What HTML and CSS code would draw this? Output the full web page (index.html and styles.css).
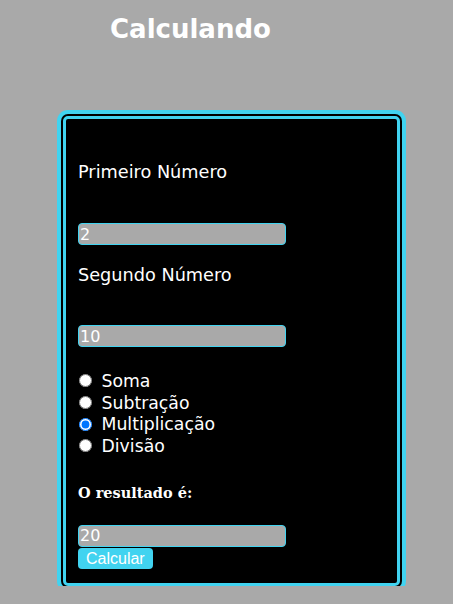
FILE: index.html
```html
<!DOCTYPE html>
<html lang="pt-BR">
<head>
<meta charset="utf-8">
<title>Calculando</title>
<link rel="stylesheet" href="styles.css">
</head>
<body>
<h1 class="title">Calculando</h1>
<div class="card">
  <label class="field-label" for="n1">Primeiro Número</label>
  <input class="num first-input" id="n1" type="text" value="2">
  <label class="field-label second-label" for="n2">Segundo Número</label>
  <input class="num first-input" id="n2" type="text" value="10">
  <div class="ops">
    <label class="op"><input type="radio" name="op"> Soma</label>
    <label class="op"><input type="radio" name="op"> Subtração</label>
    <label class="op"><input type="radio" name="op" checked> Multiplicação</label>
    <label class="op"><input type="radio" name="op"> Divisão</label>
  </div>
  <p class="result-label">O resultado é:</p>
  <input class="num result-input" type="text" value="20">
  <button class="calc" type="button">Calcular</button>
</div>
</body>
</html>
```
FILE: styles.css
```css
html, body {
  margin: 0;
  padding: 0;
  background: #a9a9a9;
}

.title {
  margin: 14px 0 0 0;
  padding-left: 110px;
  font-family: "DejaVu Sans", Verdana, sans-serif;
  font-weight: bold;
  font-size: 26px;
  line-height: 30px;
  color: #ffffff;
}

.card {
  margin: 72px 0 0 63px;
  width: 319px;
  padding: 43px 0 14px 12px;
  background: #000000;
  border: 3px solid #41d3f0;
  border-radius: 5px;
  box-shadow: 0 0 0 2px #000000, 0 0 0 6px #41d3f0;
  display: flex;
  flex-direction: column;
  align-items: flex-start;
}

.field-label {
  display: block;
  font-family: "DejaVu Sans", Verdana, sans-serif;
  font-size: 17.7px;
  line-height: 20px;
  color: #ffffff;
}

.second-label {
  margin-top: 20px;
}

.num {
  box-sizing: border-box;
  display: block;
  width: 208px;
  height: 22px;
  margin: 0;
  padding: 0 0 0 1px;
  background: #a9a9a9;
  border: 1px solid #41d3f0;
  border-radius: 4px;
  color: #ffffff;
  font-family: "DejaVu Sans", Verdana, sans-serif;
  font-size: 16px;
  outline: none;
}

.first-input {
  margin-top: 41px;
}

#n2 {
  margin-top: 40px;
}

.ops {
  margin-top: 23px;
  display: flex;
  flex-direction: column;
}

.op {
  display: flex;
  align-items: center;
  height: 21.7px;
  font-family: "DejaVu Sans", Verdana, sans-serif;
  font-size: 17.3px;
  color: #ffffff;
  white-space: pre;
}

.op input {
  margin: 0 4px 0 1px;
  width: 13px;
  height: 13px;
}

.result-label {
  margin: 28px 0 0 0;
  font-family: "DejaVu Serif", Georgia, serif;
  font-weight: bold;
  font-size: 14.5px;
  line-height: 15px;
  color: #ffffff;
}

.result-input {
  margin-top: 25px;
}

.calc {
  margin-top: 1px;
  height: 21px;
  padding: 0 8px;
  border: none;
  border-radius: 4px;
  background: #41d3f0;
  color: #ffffff;
  font-family: "Liberation Sans", Arial, sans-serif;
  font-size: 16px;
  line-height: 21px;
}
```
